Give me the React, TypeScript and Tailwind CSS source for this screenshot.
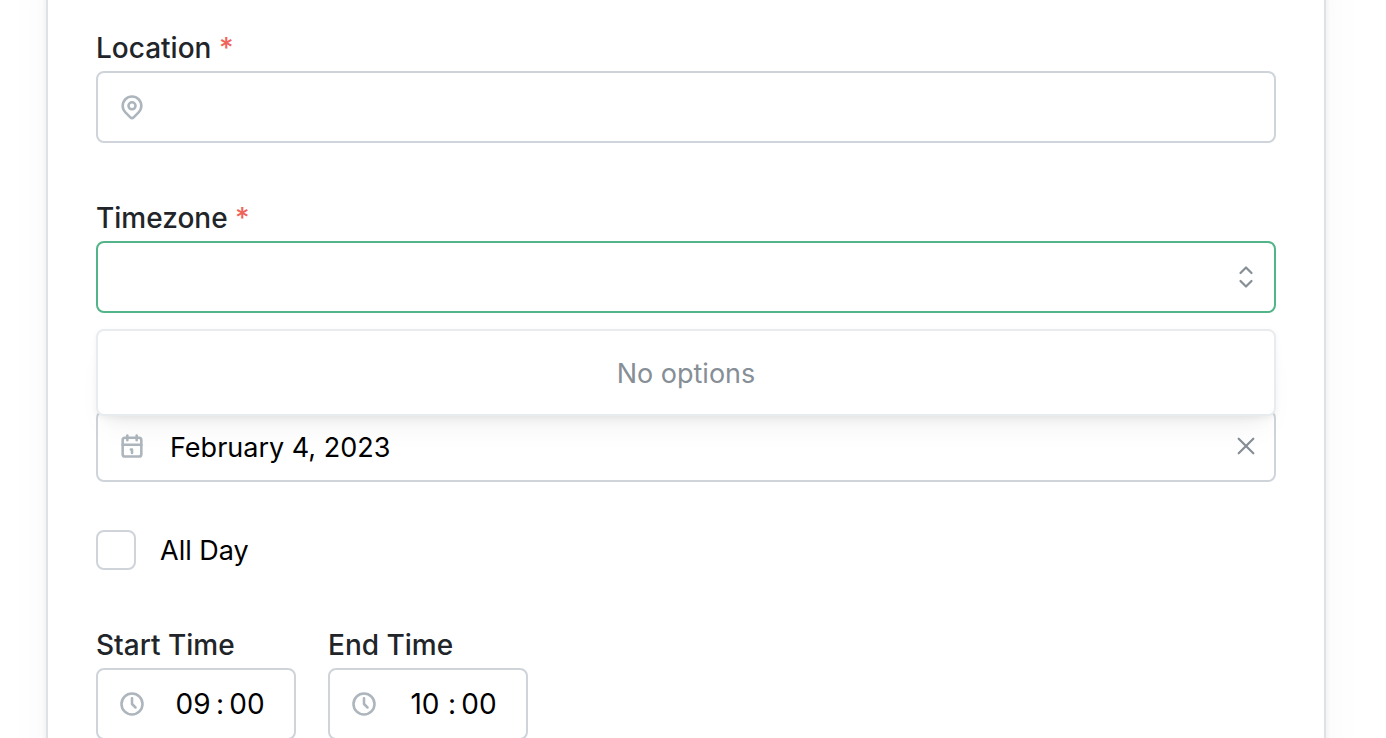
import { useState } from "react"
import type { ReactNode } from "react"

const iconProps = {
  viewBox: "0 0 24 24",
  fill: "none",
  stroke: "currentColor",
  strokeWidth: 2.2,
  strokeLinecap: "round",
  strokeLinejoin: "round",
  "aria-hidden": true,
} as const

const PinIcon = () => (
  <svg {...iconProps} className="size-7">
    <circle cx="12" cy="11" r="3" />
    <path d="M17.657 16.657L13.414 20.9a2 2 0 0 1-2.827 0l-4.244-4.243a8 8 0 1 1 11.314 0z" />
  </svg>
)

const CalendarIcon = () => (
  <svg {...iconProps} className="size-7">
    <rect x="4" y="5" width="16" height="16" rx="2" />
    <path d="M16 3v4M8 3v4M4 11h16M11 15h1M12 15v3" />
  </svg>
)

const ClockIcon = () => (
  <svg {...iconProps} className="size-7">
    <circle cx="12" cy="12" r="9" />
    <path d="M12 7v5l3 3" />
  </svg>
)

const SelectorIcon = () => (
  <svg {...iconProps} className="size-6">
    <path d="M6.5 8L12 2.5 17.5 8M6.5 16l5.5 5.5 5.5-5.5" />
  </svg>
)

const CloseIcon = () => (
  <svg {...iconProps} className="size-6">
    <path d="M4.7 4.7l14.6 14.6M19.3 4.7L4.7 19.3" />
  </svg>
)

type LabelProps = { htmlFor: string; required?: boolean; children: ReactNode }

const Label = ({ htmlFor, required, children }: LabelProps) => (
  <label htmlFor={htmlFor} className="block pb-0.5 text-[28px] leading-[42px] font-medium text-[#212529]">
    {children}
    {required && <span className="text-[#f0625a]"> *</span>}
  </label>
)

type BoxProps = { icon?: ReactNode; active?: boolean; children: ReactNode }

const InputBox = ({ icon, active, children }: BoxProps) => (
  <div className={`flex h-18 items-center rounded-lg border-2 bg-white ${active ? "border-[#52b488]" : "border-[#ced4da]"}`}>
    {icon && <span className="flex w-[68px] shrink-0 justify-center text-[#adb5bd]">{icon}</span>}
    {children}
  </div>
)

type TimeProps = { id: string; label: string; hours: string; minutes: string }

const TimeField = ({ id, label, hours, minutes }: TimeProps) => (
  <div className="w-50">
    <Label htmlFor={id}>{label}</Label>
    <InputBox icon={<ClockIcon />}>
      <div className="flex items-center pl-[7px] text-[28px]">
        <input id={id} defaultValue={hours} className="w-10 text-center outline-none" />
        <span className="w-3.5 text-center">:</span>
        <input aria-label={`${label} minutes`} defaultValue={minutes} className="w-10 text-center outline-none" />
      </div>
    </InputBox>
  </div>
)

const App = () => {
  const [date, setDate] = useState("February 4, 2023")

  return (
    <main className="h-screen overflow-hidden bg-white pr-[60px] pl-[46px] font-[Inter,sans-serif] text-[27px] text-black">
      <form className="-mt-24 border-2 border-[#dee2e6] bg-white px-12 pt-[121px] pb-24 shadow-[0_2px_6px_rgba(0,0,0,0.05),0_40px_50px_-10px_rgba(0,0,0,0.05),0_20px_20px_-10px_rgba(0,0,0,0.04)]">
        {/* location */}
        <Label htmlFor="location" required>Location</Label>
        <InputBox icon={<PinIcon />}>
          <input id="location" className="min-w-0 flex-1 outline-none" />
        </InputBox>

        {/* timezone */}
        <div className="relative mt-[54px]">
          <Label htmlFor="timezone" required>Timezone</Label>
          <InputBox active>
            <input id="timezone" role="combobox" aria-expanded="true" aria-controls="timezone-list" className="min-w-0 flex-1 pl-6 outline-none" />
            <span className="flex w-14 justify-center text-[#868e96]"><SelectorIcon /></span>
          </InputBox>
          <div
            id="timezone-list"
            role="listbox"
            className="absolute inset-x-0 top-full mt-4 flex h-[87px] items-center justify-center rounded-lg border-2 border-[#e9ecef] bg-white pt-1 text-[#868e96] shadow-[0_2px_6px_rgba(0,0,0,0.05),0_20px_30px_-10px_rgba(0,0,0,0.05),0_14px_14px_-10px_rgba(0,0,0,0.04)]"
          >
            No options
          </div>
        </div>

        {/* date */}
        <div className="mt-[53px]">
          <Label htmlFor="date" required>Date</Label>
          <InputBox icon={<CalendarIcon />}>
            <input id="date" value={date} onChange={(e) => setDate(e.target.value)} className="min-w-0 flex-1 bg-transparent pt-1 pl-1 outline-none" />
            <button type="button" aria-label="Clear date" onClick={() => setDate("")} className="flex w-14 justify-center text-[#868e96]">
              <CloseIcon />
            </button>
          </InputBox>
        </div>

        <div className="mt-12 flex items-center gap-6">
          <input id="all-day" type="checkbox" className="size-10 appearance-none rounded-lg border-2 border-[#ced4da] bg-white checked:bg-[#52b488]" />
          <label htmlFor="all-day" className="pt-0.5 leading-[38px]">All Day</label>
        </div>

        {/* times */}
        <div className="mt-[54px] flex gap-8">
          <TimeField id="start-time" label="Start Time" hours="09" minutes="00" />
          <TimeField id="end-time" label="End Time" hours="10" minutes="00" />
        </div>
      </form>
    </main>
  )
}

export default App
